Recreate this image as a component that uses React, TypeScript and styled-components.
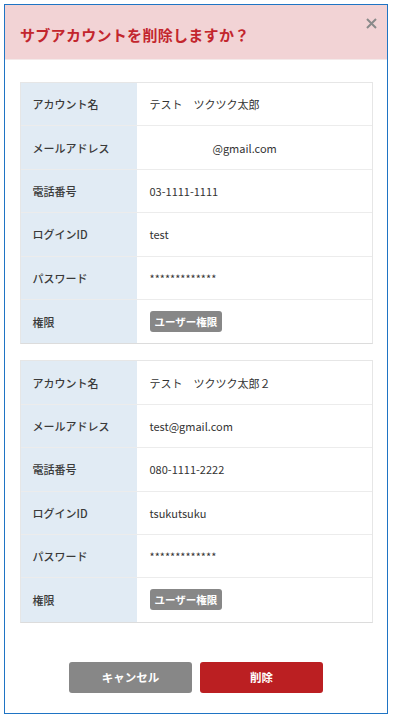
import * as React from "react";
import styled, { createGlobalStyle } from "styled-components";

const GlobalStyle = createGlobalStyle`
  html, body {
    margin: 0;
    padding: 0;
    background: #ffffff;
  }
  body {
    font-family: "Noto Sans CJK JP", "Noto Sans", sans-serif;
    color: #333;
  }
`;

const Page = styled.div`
  padding: 4px 5px 4px 4px;
  width: 393px;
  height: 718px;
  box-sizing: border-box;
`;

const Modal = styled.div`
  height: 100%;
  box-sizing: border-box;
  border: 1.5px solid #1f74c4;
  display: flex;
  flex-direction: column;
  background: #fff;
`;

const Header = styled.div`
  position: relative;
  height: 54px;
  background: #f2d3d5;
  display: flex;
  align-items: center;
  padding: 0 15px;
  border-bottom: 1px solid #f4eaea;
`;

const Title = styled.h2`
  margin: 4px 0 0;
  font-size: 15px;
  font-weight: 700;
  color: #c3262d;
  letter-spacing: 0.3px;
`;

const Close = styled.button`
  position: absolute;
  top: 9px;
  right: 7px;
  width: 18px;
  height: 18px;
  border: 0;
  padding: 0;
  background: transparent;
  display: flex;
  align-items: center;
  justify-content: center;
`;

const Body = styled.div`
  padding: 22px 14px 0 14.5px;
  display: flex;
  flex-direction: column;
  gap: 16px;
`;

const Table = styled.div`
  border: 1px solid #e6e6e6;
  border-bottom-color: #dcdcdc;
  display: flex;
  flex-direction: column;
`;

const Row = styled.div`
  display: grid;
  grid-template-columns: 116px 1fr;
  height: 43.4px;
  border-bottom: 1px solid #ececec;
  box-sizing: border-box;
  &:last-child {
    border-bottom: 0;
  }
`;

const Label = styled.div`
  background: #e1ebf4;
  display: flex;
  align-items: center;
  padding-left: 12px;
  font-size: 11px;
  color: #3a3a3a;
  font-weight: 500;
`;

const Value = styled.div<{ $indent?: number }>`
  display: flex;
  align-items: center;
  padding-left: ${(p) => 13 + (p.$indent || 0)}px;
  font-size: 11px;
  color: #333;
`;

const Badge = styled.span`
  background: #878787;
  color: #fff;
  font-size: 10.5px;
  font-weight: 700;
  padding: 2px 5px;
  border-radius: 3px;
  line-height: 17px;
`;

const Footer = styled.div`
  margin-top: 39px;
  display: flex;
  justify-content: center;
  gap: 8px;
`;

const Button = styled.button<{ $danger?: boolean }>`
  width: 123px;
  height: 31px;
  border: 0;
  border-radius: 3px;
  background: ${(p) => (p.$danger ? "#bb1f22" : "#878787")};
  color: #fff;
  font-family: inherit;
  font-size: 11.5px;
  font-weight: 700;
`;

type Account = {
  name: string;
  mail: string;
  mailIndent?: number;
  tel: string;
  login: string;
};

const accounts: Account[] = [
  { name: "テスト　ツクツク太郎", mail: "@gmail.com", mailIndent: 63, tel: "03-1111-1111", login: "test" },
  { name: "テスト　ツクツク太郎２", mail: "test@gmail.com", tel: "080-1111-2222", login: "tsukutsuku" },
];

const AccountTable = ({ account }: { account: Account }) => (
  <Table>
    <Row>
      <Label>アカウント名</Label>
      <Value>{account.name}</Value>
    </Row>
    <Row>
      <Label>メールアドレス</Label>
      <Value $indent={account.mailIndent}>{account.mail}</Value>
    </Row>
    <Row>
      <Label>電話番号</Label>
      <Value>{account.tel}</Value>
    </Row>
    <Row>
      <Label>ログインID</Label>
      <Value>{account.login}</Value>
    </Row>
    <Row>
      <Label>パスワード</Label>
      <Value>*************</Value>
    </Row>
    <Row>
      <Label>権限</Label>
      <Value>
        <Badge>ユーザー権限</Badge>
      </Value>
    </Row>
  </Table>
);

export default function App() {
  return (
    <Page>
      <GlobalStyle />
      <Modal>
        <Header>
          <Title>サブアカウントを削除しますか？</Title>
          <Close aria-label="close">
            <svg width="11" height="11" viewBox="0 0 11 11">
              <path d="M1 1L10 10M10 1L1 10" stroke="#8a8a8a" strokeWidth="2" />
            </svg>
          </Close>
        </Header>
        <Body>
          {accounts.map((a, i) => (
            <AccountTable key={i} account={a} />
          ))}
        </Body>
        <Footer>
          <Button>キャンセル</Button>
          <Button $danger>削除</Button>
        </Footer>
      </Modal>
    </Page>
  );
}
